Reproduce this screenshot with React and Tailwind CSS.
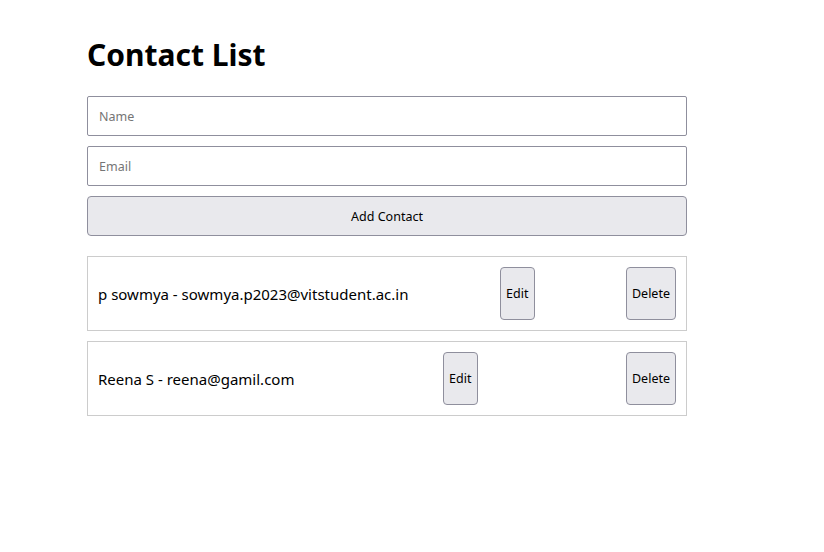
import { useState } from 'react';

const initialContacts = [
  { id: 1, name: 'p sowmya', email: 'sowmya.p2023@vitstudent.ac.in' },
  { id: 2, name: 'Reena S', email: 'reena@gamil.com' },
];

export default function App() {
  const [contacts, setContacts] = useState(initialContacts);
  const [name, setName] = useState('');
  const [email, setEmail] = useState('');

  const addContact = () => {
    if (!name || !email) return;
    setContacts([...contacts, { id: Date.now(), name, email }]);
    setName('');
    setEmail('');
  };

  const deleteContact = (id) => setContacts(contacts.filter((c) => c.id !== id));

  return (
    <div className="min-h-screen bg-white font-['Noto_Sans',sans-serif] text-black">
      <div className="ml-[87px] w-[600px] pt-[33px]">
        <h1 className="mb-[19px] text-[30px] font-bold leading-[44px]">Contact List</h1>

        {/* Form */}
        <div className="flex flex-col gap-[10px]">
          <input
            value={name}
            onChange={(e) => setName(e.target.value)}
            placeholder="Name"
            className="h-[40px] w-full rounded-[2px] border border-[#8f8f9d] px-[11px] text-[12.5px] outline-none placeholder:text-[#757575]"
          />
          <input
            value={email}
            onChange={(e) => setEmail(e.target.value)}
            placeholder="Email"
            className="h-[40px] w-full rounded-[2px] border border-[#8f8f9d] px-[11px] text-[12.5px] outline-none placeholder:text-[#757575]"
          />
          <button
            onClick={addContact}
            className="h-[40px] w-full rounded-[4px] border border-[#8f8f9d] bg-[#e9e9ed] pt-[3px] text-[12.5px]"
          >
            Add Contact
          </button>
        </div>

        {/* List */}
        <ul className="mt-[20px] flex flex-col gap-[10px]">
          {contacts.map((c) => (
            <li
              key={c.id}
              className="flex h-[75px] items-center justify-between border border-[#cccccc] p-[10px]"
            >
              <span className="pt-[2px] text-[15px]">
                {c.name} - {c.email}
              </span>
              <button className="h-[53px] w-[35px] rounded-[4px] border border-[#8f8f9d] bg-[#e9e9ed] pt-[2px] text-[12.5px]">
                Edit
              </button>
              <button
                onClick={() => deleteContact(c.id)}
                className="h-[53px] w-[50px] rounded-[4px] border border-[#8f8f9d] bg-[#e9e9ed] pt-[2px] text-[12.5px]"
              >
                Delete
              </button>
            </li>
          ))}
        </ul>
      </div>
    </div>
  );
}
